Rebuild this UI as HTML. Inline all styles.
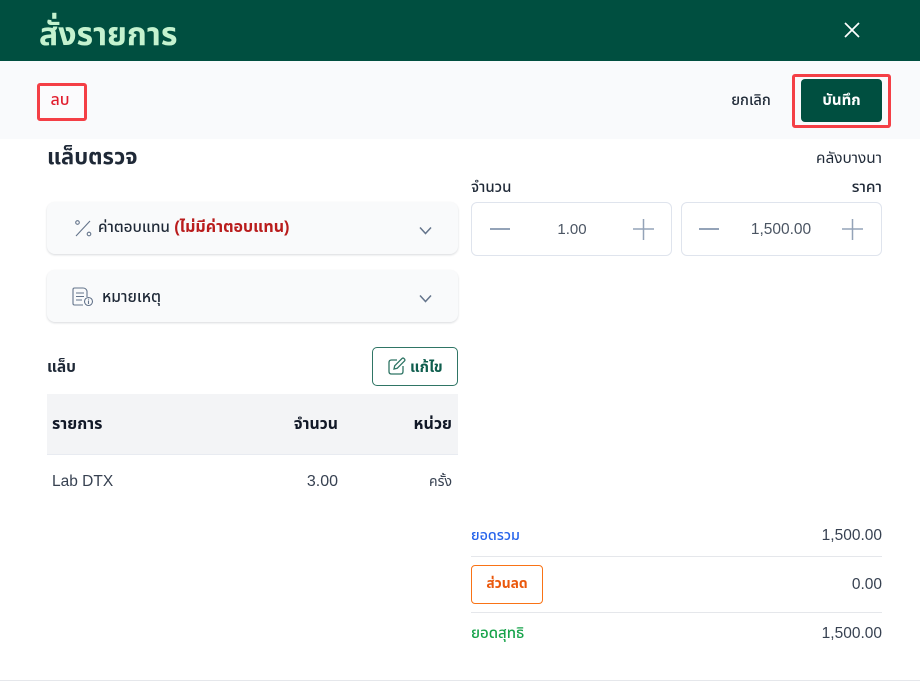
<!DOCTYPE html>
<html lang="th">
<head>
<meta charset="utf-8">
<style>
html,body{margin:0;padding:0;width:920px;height:685px;overflow:hidden;background:#fff}
body{position:relative;font-family:"Liberation Sans","Noto Sans Thai","Noto Sans CJK SC",sans-serif;color:#1f2937;font-size:14px}
.a{position:absolute;white-space:nowrap;line-height:20px}
.box{position:absolute;box-sizing:border-box}
svg{position:absolute;display:block}
.r{text-align:right}
.c{text-align:center}
</style>
</head>
<body>
<div class="box" style="left:0;top:0;width:920px;height:61px;background:#004f40"></div>
<div class="a" style="left:39px;top:14px;line-height:40px;font-size:32px;font-weight:700;color:#c4f2cf">สั่งรายการ</div>
<svg style="left:843px;top:21px" width="18" height="18" viewBox="0 0 18 18" fill="none" stroke="#fff" stroke-width="1.7"><path d="M2 2L16 16M16 2L2 16"/></svg>

<div class="box" style="left:0;top:61px;width:920px;height:78px;background:#f9fafc"></div>
<div class="box" style="left:37px;top:83px;width:50px;height:38px;border:3px solid #f43f46;border-radius:3px;background:#fbfbfd"></div>
<div class="a c" style="left:35px;top:91px;width:50px;color:#e11d2e;font-size:16px;font-weight:500">ลบ</div>
<div class="a c" style="left:721px;top:91px;width:60px;color:#1f2937;font-size:14.700px;font-weight:500">ยกเลิก</div>
<div class="box" style="left:792px;top:74px;width:99px;height:54px;border:3px solid #f43f46;border-radius:3px"></div>
<div class="box" style="left:801px;top:79px;width:81px;height:43px;background:#004f40;border-radius:4px"></div>
<div class="a c" style="left:801px;top:91px;width:81px;color:#fff;font-size:15px;font-weight:700">บันทึก</div>

<div class="a" style="left:47px;top:145px;line-height:24px;font-size:22px;font-weight:700;color:#1f2937">แล็บตรวจ</div>
<div class="a r" style="left:782px;top:149px;width:100px;color:#1f2937;font-size:15.400px">คลังบางนา</div>

<div class="box" style="left:47px;top:202px;width:411px;height:52px;background:#f9fafb;border-radius:8px;box-shadow:0 1px 2px rgba(15,23,42,.16)"></div>
<svg style="left:74px;top:219px" width="18" height="18" viewBox="0 0 18 18" fill="none" stroke="#64748b" stroke-width="1.1"><path d="M16 2L2 17"/><circle cx="3.5" cy="3.5" r="1.8"/><circle cx="15" cy="15" r="1.8"/></svg>
<div class="a" style="left:98px;top:218px;font-size:15.300px;font-weight:500;color:#1f2937">ค่าตอบแทน <span style="color:#b91c1c;font-weight:700;font-size:16px">(ไม่มีค่าตอบแทน)</span></div>
<svg style="left:419px;top:226px" width="13" height="9" viewBox="0 0 13 9" fill="none" stroke="#64748b" stroke-width="1.5"><path d="M1 1.5L6.500 7.500L12 1.500"/></svg>

<div class="box" style="left:47px;top:270px;width:411px;height:52px;background:#f9fafb;border-radius:8px;box-shadow:0 1px 2px rgba(15,23,42,.16)"></div>
<svg style="left:72px;top:287px" width="22" height="20" viewBox="0 0 22 20" fill="none" stroke="#64748b" stroke-width="1.1"><path d="M11 18H2.500Q1 18 1 16.500V2.500Q1 1 2.500 1H11Q14 1 15 4V10"/><path d="M4 6H12M4 9.500H12M4 13H10"/><circle cx="16.500" cy="14.500" r="4"/><path d="M16.500 13.500V17M16.500 11.800V12.600"/></svg>
<div class="a" style="left:102px;top:288px;font-size:15.600px;font-weight:500;color:#1f2937">หมายเหตุ</div>
<svg style="left:419px;top:294px" width="13" height="9" viewBox="0 0 13 9" fill="none" stroke="#64748b" stroke-width="1.5"><path d="M1 1.5L6.500 7.500L12 1.500"/></svg>

<div class="a" style="left:47px;top:358px;font-size:15.500px;font-weight:700;color:#1f2937">แล็บ</div>
<div class="box" style="left:372px;top:347px;width:86px;height:39px;border:1px solid #2f7565;border-radius:5px;background:#fff"></div>
<svg style="left:388px;top:357px" width="18" height="18" viewBox="0 0 18 18" fill="none" stroke="#2f7565" stroke-width="1.3"><path d="M9 3H3.500Q1 3 1 5.500V14.500Q1 17 3.500 17H12.500Q15 17 15 14.500V9"/><path d="M6 12L6.700 8.800L14 1.500Q15 .7 16 1.500L16.500 2Q17.300 3 16.500 4L9.200 11.300Z"/></svg>
<div class="a" style="left:410px;top:358px;font-size:15px;font-weight:700;color:#0f5e4e">แก้ไข</div>

<div class="box" style="left:47px;top:394px;width:411px;height:61px;background:#f3f4f6;border-bottom:1px solid #e8ebf1"></div>
<div class="a" style="left:52px;top:415px;font-size:16px;font-weight:700;color:#111827">รายการ</div>
<div class="a r" style="left:238px;top:415px;width:100px;font-size:15.800px;font-weight:700;color:#111827">จำนวน</div>
<div class="a r" style="left:352px;top:415px;width:100px;font-size:16px;font-weight:700;color:#111827">หน่วย</div>
<div class="a" style="left:52px;top:472px;font-size:15.500px;color:#374151">Lab DTX</div>
<div class="a r" style="left:238px;top:472px;width:100px;font-size:16px;color:#374151">3.00</div>
<div class="a r" style="left:352px;top:471px;width:100px;font-size:14px;color:#374151">ครั้ง</div>

<div class="a" style="left:471px;top:178px;font-size:15px;color:#1f2937;font-weight:500">จำนวน</div>
<div class="a r" style="left:782px;top:178px;width:100px;font-size:15.500px;color:#1f2937;font-weight:500">ราคา</div>

<div class="box" style="left:471px;top:202px;width:201px;height:54px;border:1px solid #dfe4ed;border-radius:6px"></div>
<div class="box" style="left:490px;top:228px;width:20px;height:1.500px;background:#94a3b8"></div>
<div class="a c" style="left:532px;top:220px;width:80px;font-size:15px;color:#4b5563">1.00</div>
<svg style="left:633px;top:219px" width="21" height="21" viewBox="0 0 21 21" stroke="#94a3b8" stroke-width="1.500"><path d="M0 10H21M10.500 0V21"/></svg>

<div class="box" style="left:681px;top:202px;width:201px;height:54px;border:1px solid #dfe4ed;border-radius:6px"></div>
<div class="box" style="left:699px;top:228px;width:20px;height:1.500px;background:#94a3b8"></div>
<div class="a c" style="left:741px;top:220px;width:80px;font-size:15.500px;color:#4b5563">1,500.00</div>
<svg style="left:842px;top:219px" width="21" height="21" viewBox="0 0 21 21" stroke="#94a3b8" stroke-width="1.500"><path d="M0 10H21M10.500 0V21"/></svg>

<div class="a" style="left:471px;top:526px;font-size:14.300px;font-weight:500;color:#2563eb">ยอดรวม</div>
<div class="a r" style="left:762px;top:526px;width:120px;font-size:15.500px;color:#374151">1,500.00</div>
<div class="box" style="left:471px;top:556px;width:411px;height:1px;background:#e5e7eb"></div>
<div class="box" style="left:471px;top:565px;width:72px;height:39px;border:1px solid #f97316;border-radius:4px"></div>
<div class="a c" style="left:471px;top:574px;width:72px;font-size:13.800px;font-weight:700;color:#ea580c">ส่วนลด</div>
<div class="a r" style="left:762px;top:575px;width:120px;font-size:15.500px;color:#374151">0.00</div>
<div class="box" style="left:471px;top:612px;width:411px;height:1px;background:#e5e7eb"></div>
<div class="a" style="left:471px;top:624px;font-size:15px;font-weight:500;color:#16a34a">ยอดสุทธิ</div>
<div class="a r" style="left:762px;top:624px;width:120px;font-size:15.500px;color:#374151">1,500.00</div>
<div class="box" style="left:0;top:680px;width:920px;height:1px;background:#e5e7eb"></div>
</body>
</html>
